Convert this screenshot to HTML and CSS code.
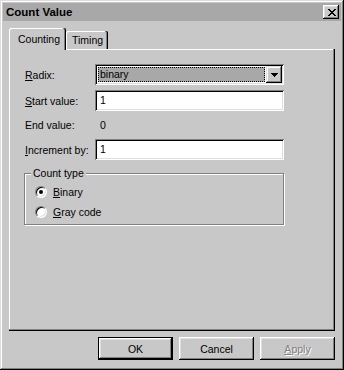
FILE: index.html
```html
<!DOCTYPE html>
<html lang="en">
<head>
  <meta charset="UTF-8" />
  <title>Count Value</title>
  <link rel="stylesheet" href="styles.css">
</head>
<body>

  <div class="window">

    <!-- Title bar -->
    <div class="titlebar">
      <span class="title">Count Value</span>
      <button class="close" title="Close">
        <svg width="8" height="7" viewBox="0 0 8 7" shape-rendering="crispEdges">
          <path d="M0 0h2v1H0zM6 0h2v1H6zM1 1h2v1H1zM5 1h2v1H5zM2 2h4v1H2zM3 3h2v1H3zM2 4h4v1H2zM1 5h2v1H1zM5 5h2v1H5zM0 6h2v1H0zM6 6h2v1H6z" fill="#000"/>
        </svg>
      </button>
    </div>

    <div class="sheet">
      <div class="tabs">
        <div class="tab active">Counting</div>
        <div class="tab">Timing</div>
      </div>

      <div class="panel">
        <div class="row">
          <label class="label"><u>R</u>adix:</label>
          <div class="combo">
            <div class="combo-value">binary</div>
            <div class="combo-btn">
              <svg width="7" height="4" viewBox="0 0 7 4" shape-rendering="crispEdges">
                <path d="M0 0h7v1H0zM1 1h5v1H1zM2 2h3v1H2zM3 3h1v1H3z" fill="#000"/>
              </svg>
            </div>
          </div>
        </div>

        <div class="row row-start">
          <label class="label"><u>S</u>tart value:</label>
          <div class="edit">1</div>
        </div>

        <div class="row row-end">
          <span class="label">End value:</span>
          <span class="value">0</span>
        </div>

        <div class="row">
          <label class="label"><u>I</u>ncrement by:</label>
          <div class="edit">1</div>
        </div>

        <div class="group">
          <span class="group-title">Count type</span>
          <div class="radio-row">
            <span class="radio checked"></span>
            <span><u>B</u>inary</span>
          </div>
          <div class="radio-row">
            <span class="radio"></span>
            <span><u>G</u>ray code</span>
          </div>
        </div>
      </div>
    </div>

    <!-- Dialog buttons -->
    <div class="buttons">
      <button class="btn default">OK</button>
      <button class="btn">Cancel</button>
      <button class="btn disabled"><u>A</u>pply</button>
    </div>

  </div>

</body>
</html>
```

FILE: styles.css
```css
body {
  margin: 0;
  background: #c8c8c8;
  font-family: "Liberation Sans", Arial, sans-serif;
  font-size: 10.5px;
  color: #000;
}

.window {
  width: 344px;
  height: 370px;
  box-sizing: border-box;
  padding: 3px;
  background: #c8c8c8;
  box-shadow: inset -1px -1px #000, inset 1px 1px #dcdcdc,
              inset -2px -2px #808080, inset 2px 2px #fff;
  display: flex;
  flex-direction: column;
}

/* title bar */
.titlebar {
  height: 18px;
  background: #a8a8a8;
  display: flex;
  align-items: center;
  justify-content: space-between;
  padding: 0 2px 0 3px;
}
.titlebar .title {
  font-size: 11.5px;
  font-weight: bold;
}
.close {
  width: 16px;
  height: 14px;
  padding: 0;
  border: none;
  background: #c8c8c8;
  box-shadow: inset -1px -1px #000, inset 1px 1px #fff,
              inset -2px -2px #808080, inset 2px 2px #dfdfdf;
  display: flex;
  align-items: center;
  justify-content: center;
}
.close svg {
  display: block;
  margin-left: 1px;
}

/* property sheet */
.sheet {
  margin: 7px 6px 0 6px;
}
.tabs {
  display: flex;
  align-items: flex-end;
  height: 22px;
  margin-bottom: -1px;
  position: relative;
  z-index: 1;
}
.tab {
  box-sizing: border-box;
  height: 18px;
  margin-bottom: 1px;
  width: 42px;
  padding-left: 6px;
  display: flex;
  align-items: center;
  background: #c8c8c8;
  border-top-left-radius: 2px;
  border-top-right-radius: 2px;
  box-shadow: inset -1px 0 #000, inset -2px 0 #808080, inset 1px 1px #fff;
}
.tab.active {
  height: 22px;
  margin-bottom: 0;
  width: 57px;
  padding-left: 9px;
}
.panel {
  height: 282px;
  box-sizing: border-box;
  padding: 15px 0 0 15px;
  box-shadow: inset -1px -1px #000, inset -2px -2px #808080, inset 1px 1px #fff;
}

/* form rows */
.row {
  display: flex;
  align-items: center;
  height: 21px;
  padding-left: 1px;
}
.row-start {
  margin-top: 5px;
}
.row-end {
  height: 28px;
}
.label {
  width: 70px;
  flex: none;
}
.value {
  padding-left: 5px;
}
.combo,
.edit {
  box-sizing: border-box;
  width: 189px;
  height: 21px;
  box-shadow: inset 1px 1px #808080, inset -1px -1px #fff,
              inset 2px 2px #000, inset -2px -2px #dfdfdf;
}
.edit {
  background: #fff;
  padding-left: 5px;
  line-height: 21px;
}
.combo {
  background: #fff;
  padding: 2px;
  display: flex;
}
.combo-value {
  flex: 1;
  margin: 1px 1px 1px 1px;
  background: #a8a8a8;
  border: 1px dotted #000;
  padding-left: 1px;
  line-height: 13px;
}
.combo-btn {
  width: 16px;
  height: 17px;
  box-sizing: border-box;
  background: #c8c8c8;
  box-shadow: inset -1px -1px #000, inset 1px 1px #dfdfdf,
              inset -2px -2px #808080, inset 2px 2px #fff;
  display: flex;
  align-items: center;
  justify-content: center;
}
.combo-btn svg {
  display: block;
}

/* group box */
.group {
  box-sizing: border-box;
  width: 260px;
  height: 52px;
  margin-top: 13px;
  padding-left: 10px;
  border: 1px solid #808080;
  box-shadow: 1px 1px 0 #fff, inset 1px 1px 0 #fff;
}
.group-title {
  display: table;
  margin: -7px 0 0 -4px;
  padding: 0 2px;
  line-height: 13px;
  background: #c8c8c8;
}
.radio-row {
  display: flex;
  align-items: center;
  gap: 6px;
  height: 20px;
}
.radio-row:first-of-type {
  margin-top: 2px;
}
.radio {
  width: 12px;
  height: 12px;
  box-sizing: border-box;
  border-radius: 50%;
  background: #fff;
  border: 1px solid;
  border-color: #808080 #fff #fff #808080;
  box-shadow: inset 1px 1px #000, inset -1px -1px #dfdfdf;
  display: flex;
  align-items: center;
  justify-content: center;
}
.radio.checked::after {
  content: "";
  width: 4px;
  height: 4px;
  border-radius: 50%;
  background: #000;
}

/* dialog buttons */
.buttons {
  display: flex;
  justify-content: flex-end;
  gap: 6px;
  margin: 6px 6px 0 0;
}
.btn {
  width: 75px;
  height: 23px;
  padding: 0;
  border: none;
  background: #c8c8c8;
  font-family: inherit;
  font-size: 10.5px;
  color: #000;
  box-shadow: inset -1px -1px #000, inset 1px 1px #fff,
              inset -2px -2px #808080, inset 2px 2px #dfdfdf;
}
.btn.default {
  border: 1px solid #000;
}
.btn.disabled {
  color: #808080;
  text-shadow: 1px 1px #fff;
}
```
